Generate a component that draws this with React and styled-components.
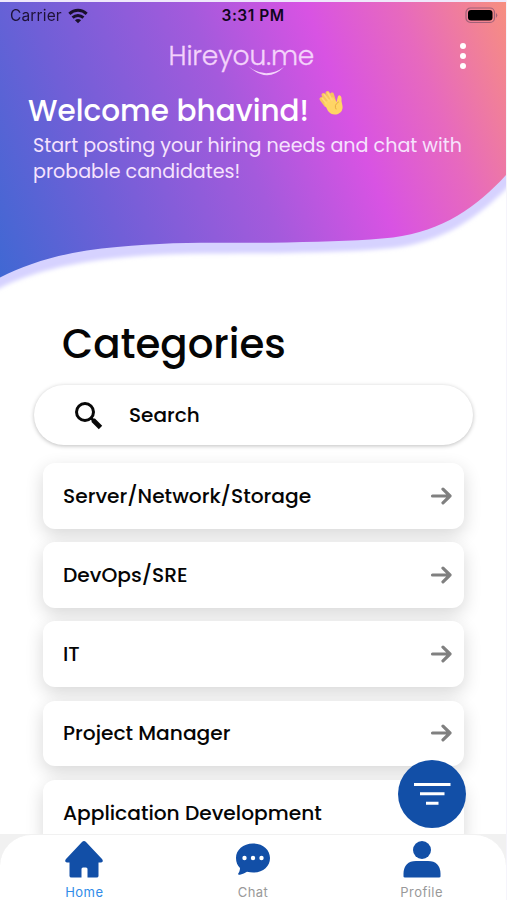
import React from 'react';
import styled, { createGlobalStyle } from 'styled-components';

const Global = createGlobalStyle`
  * { box-sizing: border-box; }
  body { margin: 0; background: #fff; }
`;

const Screen = styled.div`
  position: relative;
  width: 507px;
  height: 900px;
  overflow: hidden;
  display: flex;
  flex-direction: column;
  background: #fff;
  border-right: 1px solid #f5f4fb;
  color: #050505;
  font-family: Poppins, Inter, sans-serif;
  white-space: nowrap;
`;

const Header = styled.header`
  position: relative;
  height: 309px;
  flex: none;
  color: #fff;
`;

const Wave = styled.svg`
  position: absolute;
  inset: 0;
  display: block;
`;

const HeaderContent = styled.div`
  position: relative;
`;

const StatusBar = styled.div`
  display: grid;
  grid-template-columns: 1fr auto 1fr;
  align-items: center;
  height: 32px;
  padding: 0 8px 0 10px;
  color: #10051c;
  font: 400 15.5px/32px Inter, sans-serif;
`;

const Carrier = styled.div`
  display: flex;
  align-items: center;
  gap: 6px;
  letter-spacing: 0.15px;
  opacity: 0.85;
`;

const Clock = styled.div`
  margin-left: -2px;
  font-weight: 600;
  letter-spacing: 0.5px;
`;

const Battery = styled.svg`
  justify-self: end;
  margin-top: -2px;
`;

const BrandBar = styled.div`
  display: grid;
  grid-template-columns: 1fr auto 1fr;
  height: 60px;
  padding: 8px 37px 0 15px;
`;

const Brand = styled.div`
  position: relative;
  grid-column: 2;
  width: 147px;
  font: 300 26.5px/32px Poppins, sans-serif;
  letter-spacing: -0.1px;
  color: #f4d3fb;
  -webkit-text-stroke: 0.35px #f4d3fb;
`;

const Smile = styled.svg`
  position: absolute;
  left: 78px;
  top: 24px;
`;

const MoreButton = styled.button`
  justify-self: end;
  display: flex;
  flex-direction: column;
  align-items: center;
  gap: 4px;
  width: 12px;
  height: 32px;
  padding: 3px 0 0;
  border: 0;
  background: none;
`;

const Dot = styled.span`
  width: 6px;
  height: 6px;
  border-radius: 50%;
  background: #fff;
`;

const Welcome = styled.h1`
  display: flex;
  gap: 9px;
  margin: 0;
  padding-left: 28px;
  height: 41px;
  font-size: 29.5px;
  line-height: 38px;
  font-weight: 500;
  svg { margin-top: -4px; }
`;

const Intro = styled.p`
  margin: 0;
  padding-left: 33px;
  font-size: 19.1px;
  line-height: 26px;
  font-weight: 400;
  color: #f6e3fd;
`;

const Line = styled.span`
  display: block;
`;

const Title = styled.h2`
  margin: 0 0 0 62px;
  height: 76px;
  font-size: 40.3px;
  line-height: 70px;
  font-weight: 500;
`;

const SearchBox = styled.label`
  display: flex;
  align-items: center;
  flex: none;
  gap: 26px;
  width: 439px;
  height: 60px;
  margin-left: 34px;
  padding-left: 40px;
  border-radius: 31px;
  background: #fff;
  box-shadow: 0 1px 4px rgba(0, 0, 0, 0.26);
  font-size: 20px;
  font-weight: 500;
`;

const List = styled.main`
  display: flex;
  flex-direction: column;
  gap: 13.6px;
  padding: 18px 42px 0 43px;
`;

const Card = styled.div`
  display: flex;
  align-items: center;
  justify-content: space-between;
  flex: none;
  height: 65.6px;
  padding: 0 12px 0 20px;
  border-radius: 12px;
  background: #fff;
  box-shadow: 0 6px 18px rgba(0, 0, 0, 0.16);
  font-size: 20.2px;
  font-weight: 500;
`;

const Label = styled.span`
  line-height: 30px;
`;

const FilterButton = styled.button`
  position: absolute;
  left: 398px;
  top: 760px;
  width: 68px;
  height: 68px;
  padding: 0;
  border: 0;
  border-radius: 50%;
  background: #124fa7;
`;

const TabShelf = styled.div`
  position: absolute;
  left: 0;
  right: 0;
  bottom: 0;
  height: 66px;
  background: linear-gradient(#f1f1f1 0 32px, #fff 32px);
`;

const TabBar = styled.nav`
  display: grid;
  grid-template-columns: repeat(3, 1fr);
  height: 66px;
  border-top: 1px solid #f1f1f1;
  border-radius: 32px 32px 0 0;
  background: #fff;
`;

const Tab = styled.a`
  display: flex;
  flex-direction: column;
  align-items: center;
  padding-top: 6px;
  color: ${(p) => (p.$active ? '#318ce9' : '#999')};
  font: 400 13px/18px Inter, sans-serif;
  letter-spacing: 0.45px;
  svg { display: block; height: 42px; flex: none; }
`;

const categories = [
  'Server/Network/Storage',
  'DevOps/SRE',
  'IT',
  'Project Manager',
  'Application Development',
];

function HeaderWave() {
  return (
    <Wave width="506" height="309">
      <defs>
        <linearGradient id="sky" gradientUnits="userSpaceOnUse" x1="0" y1="277" x2="533" y2="69">
          <stop offset="0" stopColor="#4068d3" />
          <stop offset="0.22" stopColor="#705fd7" />
          <stop offset="0.48" stopColor="#a45adc" />
          <stop offset="0.67" stopColor="#d853e3" />
          <stop offset="0.82" stopColor="#e769be" />
          <stop offset="1" stopColor="#f78f7f" />
        </linearGradient>
        <filter id="soft" x="-5%" y="-5%" width="110%" height="110%">
          <feGaussianBlur stdDeviation="2" />
        </filter>
      </defs>
      <path d="M-20 30 V298 L0 288 C32 272 70 263 117 258 C175 252 225 254 287 253 C330 252 364 251 393 248 C443 242 477 218 506 189 L530 163 V30 Z" fill="#d6d2ff" filter="url(#soft)" />
      <path d="M0 2 V277.500 C32 261 70 251 117 247 C175 241 225 243.500 287 242.500 C330 241.500 364 240.500 393 237.500 C443 231 477 207 506 175 V2 Z" fill="url(#sky)" />
      <path d="M0 1 H506" stroke="#efe8fb" strokeWidth="2" />
    </Wave>
  );
}

function WifiIcon() {
  return (
    <svg width="20" height="16" viewBox="0 0 21 16" fill="none" stroke="#08030d" strokeWidth="3.1">
      <path d="M1.4 5.8 C6.6 .8 14.4 .8 19.6 5.8" />
      <path d="M4.8 9.7 C8.1 6.6 12.9 6.6 16.2 9.7" />
      <path d="M7.3 12.4 C9.2 10.7 11.8 10.7 13.7 12.4 L10.5 15.6 Z" fill="#08030d" stroke="none" />
    </svg>
  );
}

function WaveHand() {
  return (
    <svg width="28" height="29" viewBox="0 0 28 29" fill="none" strokeLinecap="round" strokeLinejoin="round">
      <path d="M8 17 L3.5 11 M11 15 L5.5 7 M14 14 L9.500 5 M16 13 L14 6.500" stroke="#f7c45f" strokeWidth="4" />
      <path d="M6 15 L15 9 L18.500 14 L19.500 10 Q20 6.500 22 7.500 Q24 8.500 23.500 13 L24.500 18 Q25.500 23 20 26 Q14 28 10 23 Z" fill="#ffd565" />
      <path d="M8 15 L4.3 10.300 M11 13 L6.300 6.800 M14 12 L10 5" stroke="#ffd778" strokeWidth="1.7" />
      <path d="M20.500 14 Q15.500 17 18 21" stroke="#e8ac43" strokeWidth="1" />
    </svg>
  );
}

function Arrow() {
  return (
    <svg width="22" height="20" viewBox="0 0 22 20" fill="none" stroke="#808080" strokeWidth="3.2" strokeLinecap="round" strokeLinejoin="round">
      <path d="M2.5 10 H20 M13 3.2 L20 10 L13 16.8" />
    </svg>
  );
}

export default function App() {
  return (
    <>
      <Global />
      <Screen>
        <Header>
          <HeaderWave />
          <HeaderContent>
            <StatusBar>
              <Carrier>Carrier<WifiIcon /></Carrier>
              <Clock>3:31 PM</Clock>
              <Battery width="33" height="17" viewBox="0 0 33 17">
                <rect x="1" y="1" width="28.5" height="14.5" rx="4.5" fill="none" stroke="#a06078" strokeWidth="1.2" />
                <rect x="3" y="3" width="24.5" height="10.5" rx="3" fill="#000" />
                <path d="M31 6 Q33.5 8 31 11 Z" fill="#a06078" />
              </Battery>
            </StatusBar>
            <BrandBar>
              <Brand>
                Hireyou.me
                <Smile width="42" height="14" viewBox="0 0 42 14">
                  <path d="M1 2 Q18 16 37 3 Q20 20 1 2Z" fill="#f4d3fb" />
                </Smile>
              </Brand>
              <MoreButton aria-label="More"><Dot /><Dot /><Dot /></MoreButton>
            </BrandBar>
            <Welcome><Line>Welcome bhavind!</Line><WaveHand /></Welcome>
            <Intro>
              <Line>Start posting your hiring needs and chat with</Line>
              <Line>probable candidates!</Line>
            </Intro>
          </HeaderContent>
        </Header>
        <Title>Categories</Title>
        <SearchBox>
          <svg width="29" height="29" viewBox="0 0 29 29" fill="none" stroke="#080808">
            <circle cx="11" cy="11" r="8.5" strokeWidth="3" />
            <path d="M17 17 L20 20" strokeWidth="3" />
            <path d="M19 19 L26.5 26.5" strokeWidth="4.8" />
          </svg>
          <Label>Search</Label>
        </SearchBox>
        <List>
          {categories.map((name) => (
            <Card key={name}><Label>{name}</Label><Arrow /></Card>
          ))}
        </List>
        <TabShelf>
          <TabBar>
            <Tab $active>
              <svg width="38" height="42" viewBox="0 0 38 42" fill="#124fa7">
                <path d="M19 0 Q20 0 21 1 L37 18 Q39 21 36 21.500 H33.5 V35 Q33.5 36.500 31.5 36.500 H22.5 V28 Q22.5 26.500 21 26.500 H18 Q16.5 26.500 16.5 28 V36.500 H6.500 Q4.500 36.500 4.500 35 V21.500 H2 Q-1 21 1 18 L17 1 Q18 0 19 0Z" />
              </svg>
              Home
            </Tab>
            <Tab>
              <svg width="36" height="42" viewBox="0 0 36 42">
                <path d="M18 2.500 C8 2.500 1 9 1 17 C1 21.500 2.500 24.500 5 27 C5 29.500 4 31.500 3 33 Q3 34 5 33.700 Q9 33 12 30.800 C25 34 35 27 35 17 C35 9 28 2.500 18 2.500Z" fill="#124fa7" />
                <g fill="#fff"><circle cx="9.500" cy="17" r="2.200" /><circle cx="18" cy="17" r="2.200" /><circle cx="26.500" cy="17" r="2.200" /></g>
              </svg>
              Chat
            </Tab>
            <Tab>
              <svg width="38" height="42" viewBox="0 0 38 42" fill="#124fa7">
                <circle cx="19" cy="9" r="9" />
                <path d="M.5 36 V32.500 Q1 20 13 20 H25 Q37 20 37.500 32.500 V35.500 Q37.500 36.500 36 36.500 H2 Q.5 36.500 .5 35.500Z" />
              </svg>
              Profile
            </Tab>
          </TabBar>
        </TabShelf>
        <FilterButton aria-label="Filter">
          <svg width="68" height="68" viewBox="0 0 68 68" stroke="#fff" strokeWidth="3" strokeLinecap="butt">
            <path d="M16 24.500 H52.500 M22 33.800 H46.500 M28 43.200 H40.500" />
          </svg>
        </FilterButton>
      </Screen>
    </>
  );
}
